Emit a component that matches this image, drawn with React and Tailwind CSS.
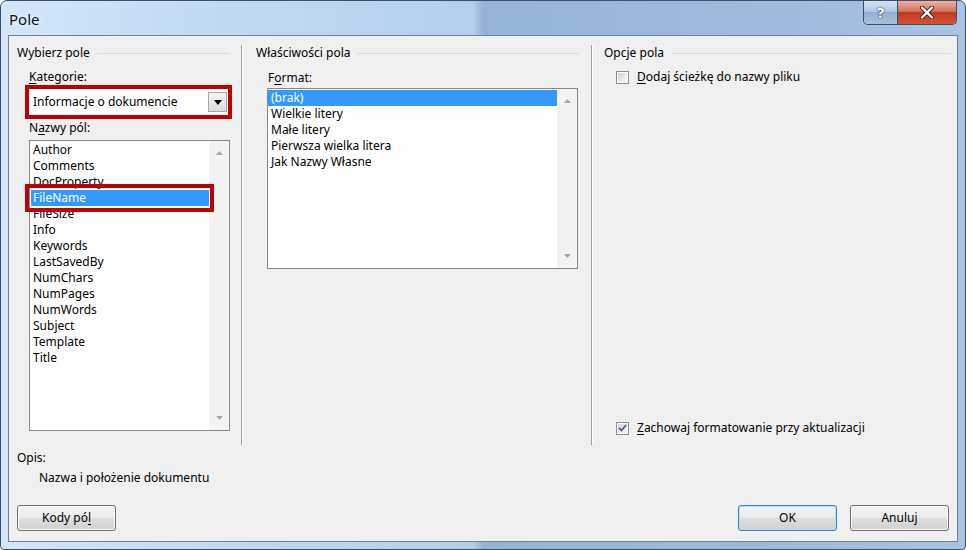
import clsx from 'clsx';

const U = ({ children }) => <span className="underline underline-offset-[2px]">{children}</span>;

const Tri = ({ up, color = '#000', w = 7, h = 4 }) => (
    <svg width={w} height={h} viewBox={`0 0 ${w} ${h}`} className="block">
        <polygon points={up ? `0,${h} ${w},${h} ${w / 2},0` : `0,0 ${w},0 ${w / 2},${h}`} fill={color} />
    </svg>
);

const GroupLabel = ({ children }) => (
    <div className="flex items-center h-4 gap-[7px]">
        <span className="leading-4 whitespace-nowrap">{children}</span>
        <div className="flex-1 h-px bg-[#d5dfe5]"></div>
    </div>
);

const Scrollbar = () => (
    <div className="w-[20px] bg-[#f3f3f3] flex flex-col items-center justify-between pt-[10px] pb-[10px]">
        <Tri up color="#a8a8a8" />
        <Tri color="#a8a8a8" />
    </div>
);

const ListBox = ({ items, selected, selClass, className, children }) => (
    <div className={clsx('relative flex border border-[#828790] bg-white', className)}>
        <div className="flex-1 pt-px">
            {items.map((it) => (
                <div
                    key={it}
                    className={clsx('h-4 leading-4 whitespace-nowrap', it === selected ? selClass : 'pl-[3px]')}
                >
                    {it}
                </div>
            ))}
        </div>
        <Scrollbar />
        {children}
    </div>
);

const Checkbox = ({ checked }) => (
    <div className="w-[13px] h-[13px] border border-[#8f8f8f] bg-white p-px shrink-0">
        <div className="w-full h-full bg-[linear-gradient(135deg,#d6d6d6,#f7f7f7)] flex items-center justify-center">
            {checked && (
                <svg width="9" height="8" viewBox="0 0 9 8">
                    <path d="M1 4 L3.5 6.5 L8 1" stroke="#4b5f8f" strokeWidth="1.8" fill="none" />
                </svg>
            )}
        </div>
    </div>
);

const Btn = ({ children, def }) => (
    <div
        className={clsx(
            'w-[99px] h-[26px] rounded-[3px] border flex items-center justify-center bg-[linear-gradient(#f3f3f3_0%,#ebebeb_48%,#dedede_52%,#d0d0d0_100%)]',
            def ? 'border-[#3c7fb1] shadow-[inset_0_0_0_1px_#b9e2f8]' : 'border-[#707070] shadow-[inset_0_0_0_1px_#fbfbfb]'
        )}
    >
        {children}
    </div>
);

const Sep = () => <div className="w-[2px] mt-[9px] border-l border-[#a0a0a0] border-r border-r-white"></div>;

const names = ['Author', 'Comments', 'DocProperty', 'FileName', 'FileSize', 'Info', 'Keywords', 'LastSavedBy', 'NumChars', 'NumPages', 'NumWords', 'Subject', 'Template', 'Title'];
const formats = ['(brak)', 'Wielkie litery', 'Małe litery', 'Pierwsza wielka litera', 'Jak Nazwy Własne'];

export default function App() {
    return (
        <div className="w-[966px] h-[550px] flex flex-col rounded-t-[7px] rounded-b-[4px] border border-[#3d4e66] bg-[linear-gradient(90deg,#d4e6f8_0%,#c0d8f2_25%,#b3cfee_49%,#94b3d9_50%,#9dbbdf_80%,#a8c4e5_100%)] font-['Noto_Sans',sans-serif] text-black overflow-hidden">
            {/* title bar */}
            <div className="h-[34px] shrink-0 flex justify-between pl-[8px] pr-[8px]">
                <div className="pt-[8px] text-[15px] leading-5 text-[#111] [text-shadow:0_0_6px_#fff]">Pole</div>
                <div className="flex h-[24px] rounded-b-[5px] border border-t-0 border-[#3b4d68] overflow-hidden">
                    <div className="w-[34px] flex items-center justify-center border-r border-[#3b4d68] bg-[linear-gradient(#d2e1f2_0%,#b4c9e3_45%,#94afd2_50%,#a8c1e0_100%)] text-white font-bold text-[15px] [text-shadow:0_0_2px_#243650,0_0_1px_#243650]">
                        ?
                    </div>
                    <div className="w-[58px] flex items-center justify-center bg-[linear-gradient(#eab2a5_0%,#d8705a_45%,#c2391f_50%,#cf5236_100%)]">
                        <svg width="14" height="13" viewBox="0 0 14 13">
                            <path d="M2 1.5 L12 11.5 M12 1.5 L2 11.5" stroke="#5a1b12" strokeWidth="4.2" strokeLinecap="round" />
                            <path d="M2 1.5 L12 11.5 M12 1.5 L2 11.5" stroke="#fff" strokeWidth="2.4" strokeLinecap="round" />
                        </svg>
                    </div>
                </div>
            </div>

            {/* client area */}
            <div className="flex-1 mx-[7px] mb-[7px] border border-[#6f8198] bg-[#f0f0f0] flex flex-col text-[12px]">
                <div className="h-[409px] shrink-0 flex">
                    {/* Wybierz pole */}
                    <div className="w-[232px] pl-[8px] pr-[11px] pt-[9px] flex flex-col">
                        <GroupLabel>Wybierz pole</GroupLabel>
                        <div className="mt-[8px] ml-[12px] leading-4">
                            <U>K</U>ategorie:
                        </div>
                        <div className="ml-[8px] w-[207px] h-[34px] border-4 border-[#c00000] bg-white flex items-center">
                            <span className="flex-1 pl-[4px] leading-4">Informacje o dokumencie</span>
                            <div className="w-[19px] h-[20px] mr-px border border-[#a6a6a6] bg-[linear-gradient(#f4f4f4,#dcdcdc)] flex items-center justify-center">
                                <Tri w={8} h={5} />
                            </div>
                        </div>
                        <div className="mt-px ml-[12px] leading-4">
                            N<U>a</U>zwy pól:
                        </div>
                        <ListBox
                            items={names}
                            selected="FileName"
                            selClass="ml-px pl-[2px] bg-[#3399ff] text-white"
                            className="mt-[4px] ml-[12px] w-[201px] h-[291px]"
                        >
                            <div className="absolute left-[-5px] top-[43px] w-[189px] h-[28px] border-4 border-[#c00000]"></div>
                        </ListBox>
                    </div>
                    <Sep />
                    {/* Właściwości pola */}
                    <div className="w-[348px] pl-[13px] pr-[12px] pt-[9px] flex flex-col">
                        <GroupLabel>Właściwości pola</GroupLabel>
                        <div className="mt-[9px] ml-[12px] leading-4">
                            F<U>o</U>rmat:
                        </div>
                        <ListBox
                            items={formats}
                            selected="(brak)"
                            selClass="pl-[3px] bg-[#3399ff] text-white"
                            className="mt-[2px] ml-[11px] w-[311px] h-[181px]"
                        />
                    </div>
                    <Sep />
                    {/* Opcje pola */}
                    <div className="flex-1 pl-[11px] pr-[6px] pt-[9px] pb-[9px] flex flex-col">
                        <GroupLabel>Opcje pola</GroupLabel>
                        <div className="mt-[8px] ml-[12px] h-4 flex items-center gap-[8px]">
                            <Checkbox />
                            <span className="leading-4">
                                <U>D</U>odaj ścieżkę do nazwy pliku
                            </span>
                        </div>
                        <div className="mt-auto ml-[12px] h-4 flex items-center gap-[8px]">
                            <Checkbox checked />
                            <span className="leading-4">
                                <U>Z</U>achowaj formatowanie przy aktualizacji
                            </span>
                        </div>
                    </div>
                </div>

                <div className="mt-[5px] pl-[8px] leading-4">Opis:</div>
                <div className="mt-[4px] pl-[30px] leading-4">Nazwa i położenie dokumentu</div>

                <div className="mt-[19px] px-[8px] flex">
                    <Btn>
                        Kody pó<U>l</U>
                    </Btn>
                    <div className="flex-1"></div>
                    <Btn def>OK</Btn>
                    <div className="w-[13px]"></div>
                    <Btn>Anuluj</Btn>
                </div>
            </div>
        </div>
    );
}
